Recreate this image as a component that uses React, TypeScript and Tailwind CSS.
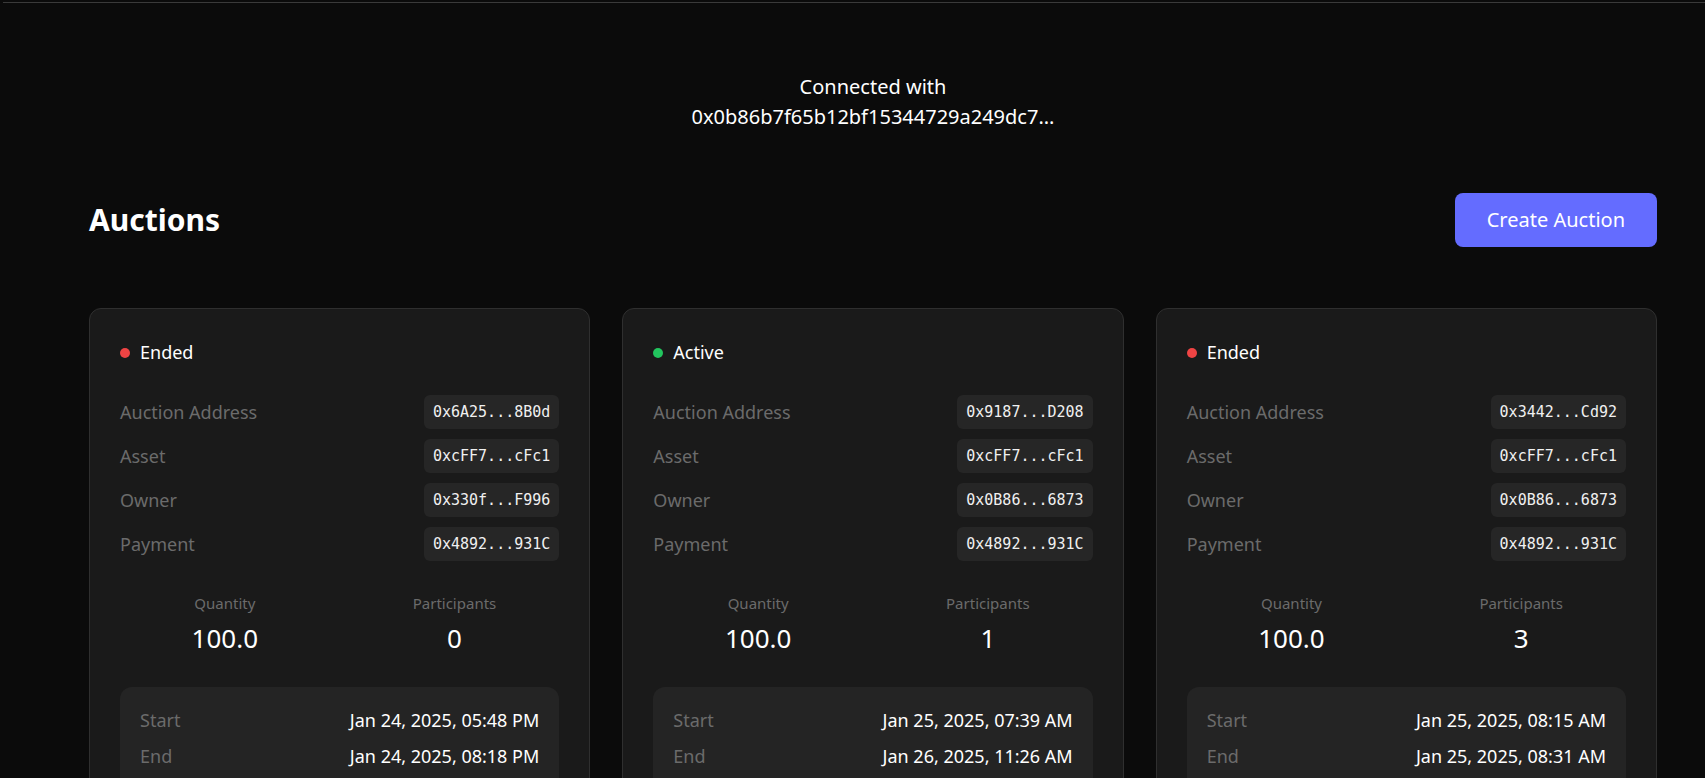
import React from "react";

type Auction = {
  status: "Ended" | "Active";
  address: string;
  asset: string;
  owner: string;
  payment: string;
  quantity: string;
  participants: string;
  start: string;
  end: string;
};

const auctions: Auction[] = [
  {
    status: "Ended",
    address: "0x6A25...8B0d",
    asset: "0xcFF7...cFc1",
    owner: "0x330f...F996",
    payment: "0x4892...931C",
    quantity: "100.0",
    participants: "0",
    start: "Jan 24, 2025, 05:48 PM",
    end: "Jan 24, 2025, 08:18 PM",
  },
  {
    status: "Active",
    address: "0x9187...D208",
    asset: "0xcFF7...cFc1",
    owner: "0x0B86...6873",
    payment: "0x4892...931C",
    quantity: "100.0",
    participants: "1",
    start: "Jan 25, 2025, 07:39 AM",
    end: "Jan 26, 2025, 11:26 AM",
  },
  {
    status: "Ended",
    address: "0x3442...Cd92",
    asset: "0xcFF7...cFc1",
    owner: "0x0B86...6873",
    payment: "0x4892...931C",
    quantity: "100.0",
    participants: "3",
    start: "Jan 25, 2025, 08:15 AM",
    end: "Jan 25, 2025, 08:31 AM",
  },
];

function AddressRow({ label, value }: { label: string; value: string }) {
  return (
    <div className="flex items-center justify-between">
      <span className="text-[18px] leading-[27px] text-[#6b6b6b]">{label}</span>
      <code className="rounded-md bg-[#262626] px-[9px] py-[6px] font-['DejaVu_Sans_Mono',monospace] text-[15px] leading-[22px] text-[#f0f0f0]">
        {value}
      </code>
    </div>
  );
}

function AuctionCard({ auction }: { auction: Auction }) {
  const active = auction.status === "Active";
  return (
    <div className="rounded-xl border border-[#2f2f2f] bg-[#1a1a1a] p-[30px]">
      {/* Status */}
      <div className="mb-[29px] flex items-center gap-[10px]">
        <span
          className={`h-[10px] w-[10px] rounded-full ${
            active ? "bg-[#22c55e]" : "bg-[#ef4444]"
          }`}
        />
        <span className="text-[18px] leading-[27px] text-white">{auction.status}</span>
      </div>

      {/* Addresses */}
      <div className="flex flex-col gap-[10px]">
        <AddressRow label="Auction Address" value={auction.address} />
        <AddressRow label="Asset" value={auction.asset} />
        <AddressRow label="Owner" value={auction.owner} />
        <AddressRow label="Payment" value={auction.payment} />
      </div>

      {/* Stats */}
      <div className="mt-[31px] grid grid-cols-2 gap-5 text-center">
        <div>
          <div className="text-[15px] leading-[22px] text-[#6b6b6b]">Quantity</div>
          <div className="mt-[6px] text-[26px] leading-[36px] text-white">{auction.quantity}</div>
        </div>
        <div>
          <div className="text-[15px] leading-[22px] text-[#6b6b6b]">Participants</div>
          <div className="mt-[6px] text-[26px] leading-[36px] text-white">
            {auction.participants}
          </div>
        </div>
      </div>

      {/* Dates */}
      <div className="mt-[31px] flex flex-col gap-[9px] rounded-xl bg-[#242424] p-5">
        <div className="flex items-center justify-between text-[18px] leading-[27px]">
          <span className="text-[#6b6b6b]">Start</span>
          <span className="text-white">{auction.start}</span>
        </div>
        <div className="flex items-center justify-between text-[18px] leading-[27px]">
          <span className="text-[#6b6b6b]">End</span>
          <span className="text-white">{auction.end}</span>
        </div>
      </div>
    </div>
  );
}

export default function App() {
  return (
    <div className="min-h-screen bg-[#0b0b0b] pt-[2px] font-['Noto_Sans',sans-serif] text-white">
      <div className="ml-[3px] h-px bg-[#3a3a3a]" />

      <div className="ml-[89px] w-[1568px]">
        {/* Wallet */}
        <div className="mt-[69px] text-center text-[20px] leading-[30px] text-white">
          <div>Connected with</div>
          <div>0x0b86b7f65b12bf15344729a249dc7...</div>
        </div>

        {/* Header */}
        <div className="mt-[61px] flex items-center justify-between">
          <h1 className="text-[30px] font-bold leading-[40px] text-white">Auctions</h1>
          <button className="rounded-lg bg-[#646cff] px-[32px] py-[12px] text-[20px] leading-[30px] text-white">
            Create Auction
          </button>
        </div>

        {/* Cards */}
        <div className="mt-[61px] grid grid-cols-3 gap-8 pb-10">
          {auctions.map((a) => (
            <AuctionCard key={a.address} auction={a} />
          ))}
        </div>
      </div>
    </div>
  );
}
